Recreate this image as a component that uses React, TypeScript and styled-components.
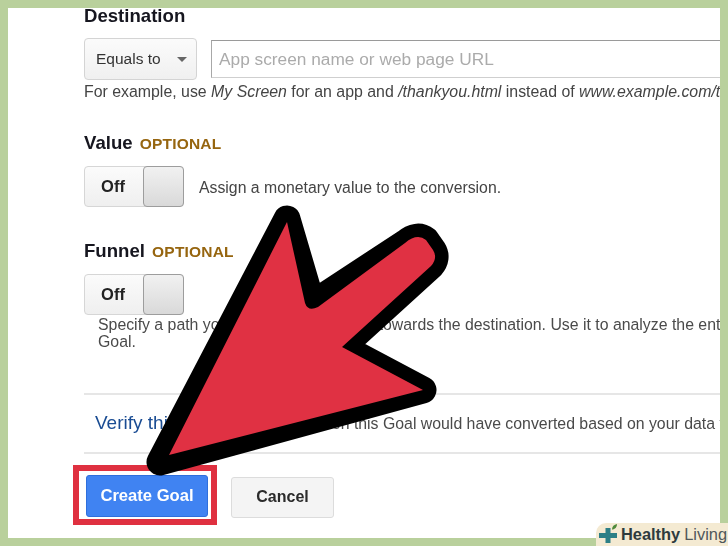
import React from 'react';
import styled, { createGlobalStyle } from 'styled-components';

const GlobalStyle = createGlobalStyle`
    html, body {
        margin: 0;
        padding: 0;
        background: #b9d09c;
    }
`;

const Frame = styled.div`
    position: relative;
    width: 728px;
    height: 546px;
    box-sizing: border-box;
    padding: 8px;
    background: #b9d09c;
    overflow: hidden;
    font-family: "Liberation Sans", Arial, sans-serif;
`;

const Panel = styled.div`
    height: 530px;
    box-sizing: border-box;
    padding-left: 76px;
    background: #fff;
    overflow: hidden;
    filter: blur(0.35px);
`;

const Heading = styled.h2<{ $top: number }>`
    margin: ${({ $top }) => $top}px 0 0;
    height: 20px;
    font-size: 18.6px;
    line-height: 20px;
    font-weight: 700;
    color: #16161f;
    white-space: nowrap;
`;

const Optional = styled.span`
    margin-left: 2px;
    font-size: 15.5px;
    color: #96650f;
    letter-spacing: 0.2px;
`;

const DestinationRow = styled.div`
    display: flex;
    align-items: center;
    gap: 14px;
    margin-top: 12px;
    height: 42px;
`;

const Select = styled.div`
    display: flex;
    align-items: center;
    justify-content: space-between;
    width: 113px;
    height: 42px;
    box-sizing: border-box;
    padding: 0 9px 0 11px;
    border: 1px solid #d4d4d4;
    border-radius: 4px;
    background: linear-gradient(#fbfbfb, #f0f0f0);
    font-size: 15.5px;
    color: #333;
`;

const Caret = styled.span`
    width: 0;
    height: 0;
    border-left: 5px solid transparent;
    border-right: 5px solid transparent;
    border-top: 5px solid #666;
`;

const UrlInput = styled.div`
    flex: 1;
    height: 38px;
    box-sizing: border-box;
    padding-left: 7px;
    border-top: 1px solid #9a9a9a;
    border-left: 1px solid #a8a8a8;
    border-bottom: 1px solid #cfcfcf;
    font-size: 17.3px;
    line-height: 36px;
    color: #ababab;
    white-space: nowrap;
`;

const Hint = styled.p`
    margin: 3px 0 0;
    font-size: 15.88px;
    line-height: 18px;
    color: #444;
    white-space: nowrap;
`;

const ToggleRow = styled.div<{ $top: number }>`
    display: flex;
    align-items: center;
    gap: 15px;
    margin-top: ${({ $top }) => $top}px;
    height: 41px;
`;

const Toggle = styled.div`
    display: flex;
    width: 100px;
    height: 41px;
    box-sizing: border-box;
    border: 1px solid #d6d6d6;
    border-radius: 4px;
    background: linear-gradient(#fbfbfb, #efefef);
`;

const ToggleLabel = styled.span`
    width: 58px;
    padding-right: 2px;
    box-sizing: border-box;
    text-align: center;
    font-size: 16.5px;
    font-weight: 700;
    line-height: 38px;
    color: #222;
`;

const Knob = styled.span`
    flex: 1;
    margin: -1px -1px -1px 0;
    border: 1px solid #9d9d9d;
    border-radius: 4px;
    background: linear-gradient(#f1f1f1, #d9d9d9);
`;

const RowText = styled.span`
    font-size: 15.8px;
    color: #444;
    white-space: nowrap;
    padding-top: 3px;
`;

const FunnelHint = styled.p`
    margin: 1px 0 0 14px;
    font-size: 15.85px;
    line-height: 17px;
    color: #4a4a4a;
    white-space: nowrap;
`;

const Rule = styled.hr<{ $top: number }>`
    margin: ${({ $top }) => $top}px 0 0;
    border: 0;
    height: 2px;
    background: #e6e6e6;
`;

const VerifyRow = styled.div`
    height: 57px;
    padding-left: 11px;
    font-size: 15.85px;
    line-height: 56px;
    color: #4a4a4a;
    white-space: nowrap;
`;

const VerifyLink = styled.a`
    margin-right: 21px;
    font-size: 19px;
    color: #1a4c93;
`;

const Actions = styled.div`
    display: flex;
    align-items: center;
    gap: 14px;
    margin: 11px 0 0 -11px;
`;

const Highlight = styled.div`
    width: 144px;
    height: 60px;
    box-sizing: border-box;
    border: 6px solid #df3040;
    padding: 4px 0 0 7px;
`;

const PrimaryButton = styled.button`
    display: block;
    width: 122px;
    height: 42px;
    padding: 0;
    border: 1px solid #2f6fdc;
    border-radius: 3px;
    background: #4083f2;
    font-family: inherit;
    font-size: 16.6px;
    font-weight: 700;
    color: #fff;
`;

const CancelButton = styled.button`
    width: 103px;
    height: 41px;
    margin-top: 4px;
    padding: 0;
    border: 1px solid #dcdcdc;
    border-radius: 3px;
    background: #f4f4f4;
    font-family: inherit;
    font-size: 16px;
    font-weight: 700;
    color: #2b2b2b;
`;

const ArrowOverlay = styled.svg`
    position: absolute;
    left: 0;
    top: 0;
    width: 728px;
    height: 546px;
    pointer-events: none;
`;

const Badge = styled.div`
    position: absolute;
    right: 0;
    bottom: 0;
    display: flex;
    align-items: center;
    gap: 2px;
    width: 132px;
    height: 23px;
    box-sizing: border-box;
    padding-left: 3px;
    border-top-left-radius: 10px;
    background: #f4ead2;
    font-size: 16.4px;
    color: #50575a;
    white-space: nowrap;
`;

const BadgeStrong = styled.strong`
    color: #2e3b3e;
    margin-right: 4px;
`;

function App() {
    return (
        <Frame>
            <GlobalStyle />
            <Panel>
                <Heading $top={-2}>Destination</Heading>
                <DestinationRow>
                    <Select>Equals to <Caret /></Select>
                    <UrlInput>App screen name or web page URL</UrlInput>
                </DestinationRow>
                <Hint>
                    For example, use <em>My Screen</em> for an app and <em>/thankyou.html</em> instead of <em>www.example.com/thankyou.html</em>
                </Hint>

                <Heading $top={32}>Value <Optional>OPTIONAL</Optional></Heading>
                <ToggleRow $top={13}>
                    <Toggle><ToggleLabel>Off</ToggleLabel><Knob /></Toggle>
                    <RowText>Assign a monetary value to the conversion.</RowText>
                </ToggleRow>

                <Heading $top={34}>Funnel <Optional>OPTIONAL</Optional></Heading>
                <ToggleRow $top={13}>
                    <Toggle><ToggleLabel>Off</ToggleLabel><Knob /></Toggle>
                </ToggleRow>
                <FunnelHint>
                    Specify a path you expect traffic to take towards the destination. Use it to analyze the entrance and exit points<br />
                    Goal.
                </FunnelHint>

                <Rule $top={43} />
                <VerifyRow>
                    <VerifyLink>Verify this Goal</VerifyLink> See how often this Goal would have converted based on your data for the last 7 days.
                </VerifyRow>
                <Rule $top={0} />

                <Actions>
                    <Highlight><PrimaryButton>Create Goal</PrimaryButton></Highlight>
                    <CancelButton>Cancel</CancelButton>
                </Actions>
            </Panel>

            <ArrowOverlay viewBox="0 0 728 546">
                <path
                    d="M160 462 L287 219 L312 304 L405 243 Q417 233 426 240 L433 250 Q438 258 431 266 L342 347 L423 390 Z"
                    fill="#000"
                    stroke="#000"
                    strokeWidth="27"
                    strokeLinejoin="round"
                />
                <path
                    d="M169 455 L287 222 L305 303 Q308 312 318 307 L405 243 Q417 233 426 240 L433 250 Q438 258 431 266 L342 347 L423 390 Z"
                    fill="#e03143"
                />
            </ArrowOverlay>

            <Badge>
                <svg width="20" height="23" viewBox="0 0 20 23">
                    <path d="M6.5 5h5v5H18v5h-6.5v5h-5v-5H0v-5h6.5z" fill="#2c7f86" />
                    <path d="M13 6.5c0-3 2-5 5-5.500 0 3-2 5.500-5 5.500z" fill="#4f8a3a" />
                </svg>
                <span><BadgeStrong>Healthy</BadgeStrong>Living</span>
            </Badge>
        </Frame>
    );
}

export default App;
